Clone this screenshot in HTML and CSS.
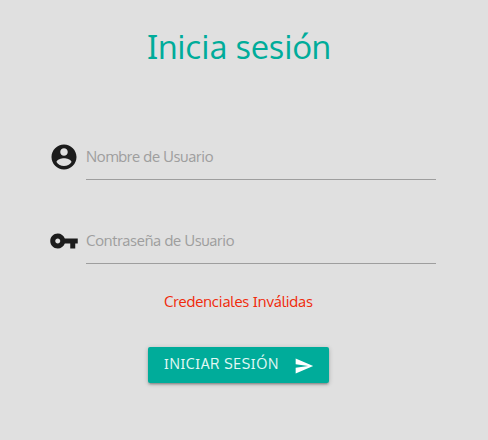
FILE: index.html
```html
<!DOCTYPE html>
<html lang="es">
<head>
<meta charset="utf-8">
<title>Inicia sesión</title>
<link rel="stylesheet" href="styles.css">
</head>
<body>
<main class="login">
  <h1 class="title"><svg class="title-text" width="184" height="44" role="img"><text x="-1" y="33" textLength="184" lengthAdjust="spacingAndGlyphs"><tspan class="serif-i">I</tspan>nicia sesión</text></svg></h1>
  <form class="form">
    <div class="field">
      <svg class="icon" viewBox="0 0 24 24"><path d="M12 2C6.48 2 2 6.48 2 12s4.48 10 10 10 10-4.48 10-10S17.52 2 12 2zm0 3c1.66 0 3 1.34 3 3s-1.34 3-3 3-3-1.340-3-3 1.340-3 3-3zm0 14.200c-2.500 0-4.710-1.280-6-3.220.030-1.990 4-3.080 6-3.080 1.990 0 5.970 1.090 6 3.080-1.290 1.940-3.500 3.220-6 3.220z"/></svg>
      <label class="line"><span class="label">Nombre de Usuario</span></label>
    </div>
    <div class="field">
      <svg class="icon" viewBox="0 0 24 24"><path d="M12.650 10C11.830 7.670 9.610 6 7 6c-3.310 0-6 2.690-6 6s2.690 6 6 6c2.610 0 4.830-1.670 5.650-4H17v4h4v-4h2v-4H12.650zM7 14c-1.100 0-2-.9-2-2s.9-2 2-2 2 .9 2 2-.9 2-2 2z"/></svg>
      <label class="line"><span class="label">Contraseña de Usuario</span></label>
    </div>
    <p class="error">Credenciales <span class="serif-i">I</span>nválidas</p>
    <button class="button" type="button"><span class="button-text"><span class="serif-i">I</span>N<span class="serif-i">I</span>C<span class="serif-i">I</span>AR SES<span class="serif-i">I</span>ÓN</span><svg class="send" viewBox="0 0 24 24"><path d="M2.010 21L23 12 2.010 3 2 10l15 2-15 2z"/></svg></button>
  </form>
</main>
</body>
</html>
```
FILE: styles.css
```css
* { box-sizing: border-box; }
body { margin: 0; height: 440px; overflow: hidden; background: #e0e0e0; font-family: Oxygen, "Noto Sans", sans-serif; font-size: 15px; }
.login { display: flex; flex-direction: column; align-items: center; padding-top: 26px; }
.title { margin: 0 0 71px; width: 182px; height: 44px; align-self: flex-start; margin-left: 148px; font-weight: 400; font-size: 33.6px; }
.title-text { display: block; overflow: visible; fill: #00ac9a; }
.serif-i { font-family: "Noto Sans", sans-serif; line-height: 1; }
.form { width: 488px; display: flex; flex-direction: column; }
.field { display: flex; height: 39px; margin: 0 52px 45px 49px; gap: 7px; }
.icon { width: 30px; height: 30px; margin-top: 1px; fill: #1c1c1c; }
.line { flex: 1; border-bottom: 1px solid #9e9e9e; color: #9e9e9e; line-height: 32px; }
.label { letter-spacing: -0.24px; }
.error { margin: -18px 0 0 164px; color: #f02b0c; line-height: 22px; letter-spacing: -0.12px; }
.button { display: flex; align-items: center; justify-content: space-between; width: 181px; height: 36px; margin: 34px 0 0 148px; padding: 0 15px 0 16px; border: 0; border-radius: 2px; background: #00ac9a; color: #e3f8f5; font: 14px Oxygen, "Noto Sans", sans-serif; box-shadow: 0 2px 2px rgba(0,0,0,.14), 0 3px 1px -2px rgba(0,0,0,.12), 0 1px 5px rgba(0,0,0,.2); }
.button-text { padding-bottom: 3px; letter-spacing: 0.66px; white-space: nowrap; }
.send { width: 20px; height: 20px; margin-top: 1px; fill: #fff; }
```
